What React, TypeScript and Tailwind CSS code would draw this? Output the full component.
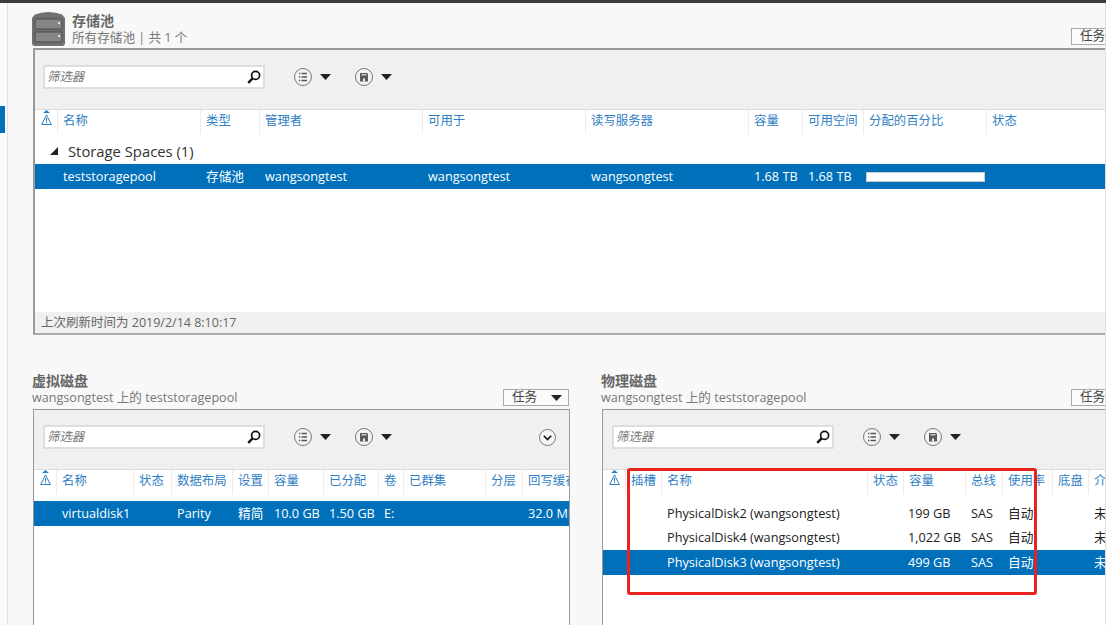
const font = "font-['Open_Sans','Noto_Sans_CJK_SC',sans-serif]";

const poolCols = [
  { title: "名称", value: "teststoragepool", w: "w-[143px]" },
  { title: "类型", value: "存储池", w: "w-[59px]" },
  { title: "管理者", value: "wangsongtest", w: "w-[163px]" },
  { title: "可用于", value: "wangsongtest", w: "w-[163px]" },
  { title: "读写服务器", value: "wangsongtest", w: "w-[163px]" },
  { title: "容量", value: "1.68 TB", w: "w-[54px]" },
  { title: "可用空间", value: "1.68 TB", w: "w-[61px]" },
  { title: "分配的百分比", value: "", w: "w-[123px]", bar: true },
  { title: "状态", value: "", w: "w-[36px]" },
];

const virtualCols = [
  { title: "名称", value: "virtualdisk1", w: "w-[77px]" },
  { title: "状态", value: "", w: "w-[38px]" },
  { title: "数据布局", value: "Parity", w: "w-[61px]" },
  { title: "设置", value: "精简", w: "w-[36px]" },
  { title: "容量", value: "10.0 GB", w: "w-[55px]" },
  { title: "已分配", value: "1.50 GB", w: "w-[55px]" },
  { title: "卷", value: "E:", w: "w-[25px]" },
  { title: "已群集", value: "", w: "w-[82px]" },
  { title: "分层", value: "", w: "w-[37px]" },
  { title: "回写缓存", value: "32.0 MB", w: "w-[60px]" },
];

const diskCols = [
  { title: "插槽", w: "w-[36px]" },
  { title: "名称", w: "w-[206px]" },
  { title: "状态", w: "w-[36px]" },
  { title: "容量", w: "w-[62px]" },
  { title: "总线", w: "w-[37px]" },
  { title: "使用率", w: "w-[50px]" },
  { title: "底盘", w: "w-[36px]" },
  { title: "介质类型", w: "w-[60px]" },
];

const diskRows = [
  { name: "PhysicalDisk2 (wangsongtest)", size: "199 GB", selected: false },
  { name: "PhysicalDisk4 (wangsongtest)", size: "1,022 GB", selected: false },
  { name: "PhysicalDisk3 (wangsongtest)", size: "499 GB", selected: true },
];

const Caret = ({ className = "" }: { className?: string }) => (
  <svg width="11" height="6" viewBox="0 0 11 6" className={className}>
    <path d="M0 0h11L5.5 6z" fill="#222" />
  </svg>
);

const ServerIcon = () => (
  <svg width="33" height="34" viewBox="0 0 33 34" className="shrink-0">
    <path d="M3 2.5Q9 0 16.5 0T30 2.5L33 6v25q0 3-3 3H3q-3 0-3-3V6z" fill="#707070" />
    <rect x="3" y="7" width="27" height="10" rx="1" fill="#858585" stroke="#4a4a4a" />
    <rect x="3" y="20" width="27" height="10" rx="1" fill="#858585" stroke="#4a4a4a" />
    <rect x="26" y="10" width="2" height="2" fill="#e4e4e4" />
    <rect x="26" y="23" width="2" height="2" fill="#e4e4e4" />
  </svg>
);

const SearchIcon = () => (
  <svg width="14" height="14" viewBox="0 0 14 14">
    <circle cx="8.6" cy="5.4" r="4" fill="none" stroke="#111" strokeWidth="1.7" />
    <path d="M5.6 8.4 1.2 12.8" stroke="#111" strokeWidth="2.4" />
  </svg>
);

const ListIcon = () => (
  <svg width="18" height="18" viewBox="0 0 18 18">
    <circle cx="9" cy="9" r="8.5" fill="#f4f4f4" stroke="#777" />
    <path d="M7.5 5.5H13M7.5 9H13M7.5 12.5H13M5 5.5h1.3M5 9h1.3M5 12.5h1.3" stroke="#555" strokeWidth="1.6" />
  </svg>
);

const SaveIcon = () => (
  <svg width="18" height="18" viewBox="0 0 18 18">
    <circle cx="9" cy="9" r="8.5" fill="#f4f4f4" stroke="#777" />
    <path d="M5 5h7l1 1v7.5H5z" fill="#5a5a5a" />
    <rect x="6.5" y="6" width="5" height="1.5" fill="#c8c8c8" />
    <rect x="8" y="10.5" width="2" height="3" fill="#eee" />
  </svg>
);

const ExpandIcon = () => (
  <svg width="17" height="17" viewBox="0 0 17 17">
    <circle cx="8.5" cy="8.5" r="8" fill="#f6f6f6" stroke="#777" />
    <path d="M4.8 6.8 8.5 10.5l3.7-3.7" fill="none" stroke="#111" strokeWidth="1.6" />
  </svg>
);

const AlertIcon = () => (
  <svg width="11" height="16" viewBox="0 0 11 16">
    <path d="M5.5 0 9 3H2z" fill="#2a7fc4" />
    <path d="M5.5 5 10.3 14.5H.7z" fill="#fff" stroke="#2a7fc4" />
    <path d="M5.5 8v3.5M5.5 12.3v1" stroke="#2a7fc4" />
  </svg>
);

const TaskButton = () => (
  <div className="flex h-[17px] w-[66px] shrink-0 items-center justify-between border border-[#aaa] bg-[#fbfbfb] pl-[8px] pr-[6px] text-[12.6px] leading-none text-[#444]">
    <span>任务</span>
    <Caret />
  </div>
);

const Toolbar = ({ expand = false, inset = "pl-[9px]" }: { expand?: boolean; inset?: string }) => (
  <div className={`flex h-[59px] items-center bg-[#f0f0f0] pb-[5px] pr-[13px] ${inset}`}>
    <div className="flex h-[24px] w-[222px] shrink-0 items-center justify-between border-2 border-[#dedede] bg-white pl-[2px] pr-[2px]">
      <span className="text-[12.4px] italic text-[#777]">筛选器</span>
      <SearchIcon />
    </div>
    <div className="ml-[29px]"><ListIcon /></div>
    <Caret className="ml-[8px]" />
    <div className="ml-[24px]"><SaveIcon /></div>
    <Caret className="ml-[8px]" />
    {expand && <div className="ml-auto"><ExpandIcon /></div>}
  </div>
);

const HeaderRow = ({ cols }: { cols: { title: string; w: string }[] }) => (
  <div className="flex h-[25px] overflow-hidden border-t border-[#dcdcdc] bg-white">
    <div className="flex w-[22px] shrink-0 justify-center"><AlertIcon /></div>
    {cols.map((c) => (
      <div
        key={c.title}
        className={`${c.w} h-full shrink-0 overflow-hidden whitespace-nowrap border-l border-[#ececec] pl-[5px] text-[12.4px] leading-[21px] text-[#2f80c4]`}
      >
        {c.title}
      </div>
    ))}
  </div>
);

const Heading = ({ title, sub }: { title: string; sub: string }) => (
  <div className="min-w-0 leading-none">
    <div className="text-[14px] font-bold leading-[18px] text-[#666]">{title}</div>
    <div className="text-[12.6px] leading-[16px] whitespace-nowrap text-[#777]">{sub}</div>
  </div>
);

export default function App() {
  return (
    <div className={`${font} flex h-[625px] w-[1111px] flex-col overflow-hidden bg-white`}>
      <div className="h-[3px] w-[1106px] shrink-0 bg-[#3c3c3c]" />
      <div className="flex min-h-0 flex-1">
        {/* left rail */}
        <div className="w-[8px] shrink-0 border-r border-[#e2e2e2] bg-[#fbfbfb] pt-[103px]">
          <div className="h-[27px] w-[5px] bg-[#0070bb]" />
        </div>

        <div className="w-[1098px] shrink-0 overflow-hidden border-r border-[#dedede] bg-[#f8f8f8] pl-[24px]">
          {/* storage pools */}
          <div className="flex h-[45px] items-end justify-between pb-[2px]">
            <div className="flex items-end gap-[7px]">
              <ServerIcon />
              <Heading title="存储池" sub="所有存储池 | 共 1 个" />
            </div>
            <div className="-mr-[32px] mb-[1px]"><TaskButton /></div>
          </div>
          <div className="ml-[1px] flex h-[287px] w-[1080px] flex-col border-y-2 border-l-2 border-[#999] border-b-[#aaa] bg-white">
            <Toolbar inset="pl-[8px]" />
            <HeaderRow cols={poolCols} />
            <div className="flex h-[30px] items-end pb-[2px] pl-[15px] text-[14.8px] text-[#333]">
              <svg width="8" height="8" viewBox="0 0 8 8" className="mb-[7px] mr-[10px]">
                <path d="M8 0v8H0z" fill="#222" />
              </svg>
              Storage Spaces (1)
            </div>
            <div className="flex h-[25px] items-center bg-[#0070bb] text-[12.7px] text-white">
              <div className="w-[22px] shrink-0" />
              {poolCols.map((c) => (
                <div key={c.title} className={`${c.w} shrink-0 whitespace-nowrap pl-[6px]`}>
                  {c.bar ? <div className="-ml-[3px] h-[10px] w-[119px] border border-[#ccc] bg-white" /> : c.value}
                </div>
              ))}
            </div>
            <div className="flex-1" />
            <div className="flex h-[21px] items-center bg-[#f0f0f0] pl-[6px] pt-[2px] text-[12.5px] text-[#666]">
              上次刷新时间为 2019/2/14 8:10:17
            </div>
          </div>

          <div className="mt-[37px] flex gap-[31px]">
            {/* virtual disks */}
            <div className="w-[538px] shrink-0">
              <div className="flex h-[37px] items-end justify-between pb-[3px]">
                <Heading title="虚拟磁盘" sub="wangsongtest 上的 teststoragepool" />
                <div className="mr-[1px]"><TaskButton /></div>
              </div>
              <div className="ml-[1px] h-[300px] border-l border-r border-t border-[#999] bg-white">
                <Toolbar expand />
                <HeaderRow cols={virtualCols} />
                <div className="mt-[7px] flex h-[25px] items-center overflow-hidden bg-[#0070bb] text-[12.7px] text-white">
                  <div className="w-[22px] shrink-0" />
                  {virtualCols.map((c) => (
                    <div key={c.title} className={`${c.w} shrink-0 whitespace-nowrap pl-[6px]`}>
                      {c.value}
                    </div>
                  ))}
                </div>
              </div>
            </div>

            {/* physical disks */}
            <div className="w-[505px] shrink-0">
              <div className="flex h-[37px] items-end justify-between pb-[3px]">
                <Heading title="物理磁盘" sub="wangsongtest 上的 teststoragepool" />
                <div className="-mr-[31px]"><TaskButton /></div>
              </div>
              <div className="relative ml-[1px] h-[300px] border-l border-t border-[#999] bg-white">
                <Toolbar />
                <HeaderRow cols={diskCols} />
                <div className="mt-[7px]">
                  {diskRows.map((r) => (
                    <div
                      key={r.name}
                      className={`flex h-[24.5px] items-center overflow-hidden whitespace-nowrap text-[12.7px] ${r.selected ? "bg-[#0070bb] text-white" : "text-[#222]"}`}
                    >
                      <div className="w-[64px] shrink-0" />
                      <div className="w-[241px] shrink-0">{r.name}</div>
                      <div className="w-[63px] shrink-0">{r.size}</div>
                      <div className="w-[37px] shrink-0">SAS</div>
                      <div className="w-[86px] shrink-0">自动</div>
                      <div className="shrink-0">未</div>
                    </div>
                  ))}
                </div>
                {/* red annotation */}
                <div className="absolute left-[24px] top-[58px] h-[127px] w-[410px] rounded-[3px] border-[3px] border-[#e8231f]" />
              </div>
            </div>
          </div>
        </div>
      </div>
    </div>
  );
}
